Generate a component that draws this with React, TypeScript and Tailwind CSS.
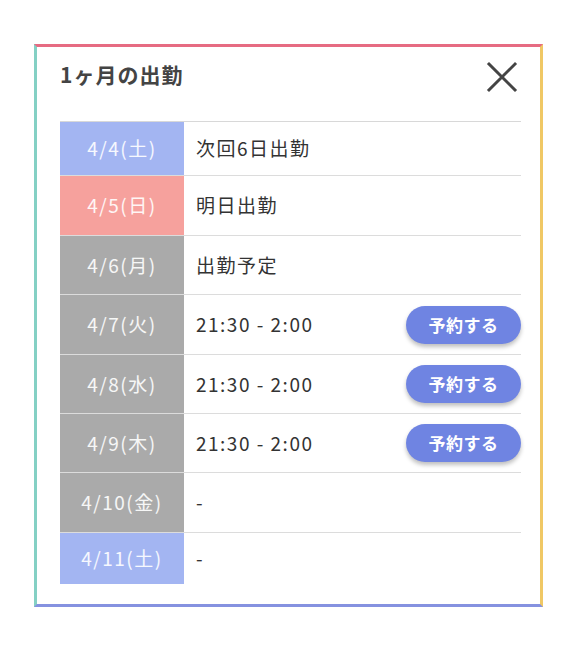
import React from "react";

type Row = {
  date: string;
  info: string;
  color: "sat" | "sun" | "day";
  reserve?: boolean;
  h: string;
};

const rows: Row[] = [
  { date: "4/4(土)", info: "次回6日出勤", color: "sat", h: "h-[53px]" },
  { date: "4/5(日)", info: "明日出勤", color: "sun", h: "h-[60px]" },
  { date: "4/6(月)", info: "出勤予定", color: "day", h: "h-[59px]" },
  { date: "4/7(火)", info: "21:30 - 2:00", color: "day", reserve: true, h: "h-[60px]" },
  { date: "4/8(水)", info: "21:30 - 2:00", color: "day", reserve: true, h: "h-[59px]" },
  { date: "4/9(木)", info: "21:30 - 2:00", color: "day", reserve: true, h: "h-[59px]" },
  { date: "4/10(金)", info: "-", color: "day", h: "h-[60px]" },
  { date: "4/11(土)", info: "-", color: "sat", h: "h-[52px]" },
];

const dateBg = {
  sat: "bg-[#a3b5f2]",
  sun: "bg-[#f6a19d]",
  day: "bg-[#aaaaaa]",
};

export default function App() {
  return (
    <div
      className="min-h-[651px] bg-white pt-[44px] pl-[34px] pr-[33px]"
      style={{ fontFamily: '"Noto Sans CJK JP", "Noto Sans", sans-serif' }}
    >
      <div className="border-t-[3px] border-l-[3px] border-r-[3px] border-b-[3px] border-t-[#e66b82] border-l-[#84d0c4] border-r-[#f0c865] border-b-[#8592e0] bg-white pl-[23px] pr-[19px] pb-[20px]">
        {/* header */}
        <div className="flex h-[74px] items-start justify-between">
          <h1 className="mt-[12px] text-[21px] font-bold tracking-[1px] text-[#444]">1ヶ月の出勤</h1>
          <button className="mt-[14px] mr-[3px] flex h-[32px] w-[32px] items-center justify-center">
            <svg width="32" height="32" viewBox="0 0 32 32">
              <path d="M3 3 L29 29 M29 3 L3 29" stroke="#444" strokeWidth="3" strokeLinecap="square" />
            </svg>
          </button>
        </div>

        {/* schedule */}
        <div className="border-t border-[#d8d8d8]">
          {rows.map((r, i) => (
            <div
              key={r.date}
              className={`flex ${r.h} ${i > 0 ? "border-t border-[#dcdcdc]" : ""}`}
            >
              <div
                className={`flex w-[124px] shrink-0 items-center justify-center text-[19px] tracking-[1.5px] text-white/90 ${dateBg[r.color]}`}
              >
                {r.date}
              </div>
              <div className="flex flex-1 items-center justify-between pl-[12px]">
                <span className="text-[19px] tracking-[1.5px] text-[#333]">{r.info}</span>
                {r.reserve && (
                  <button className="h-[38px] w-[115px] rounded-full bg-[#6f84e2] text-[17px] font-bold tracking-[0.5px] text-white shadow-[0_3px_4px_rgba(0,0,0,0.25)]">
                    予約する
                  </button>
                )}
              </div>
            </div>
          ))}
        </div>
      </div>
    </div>
  );
}
